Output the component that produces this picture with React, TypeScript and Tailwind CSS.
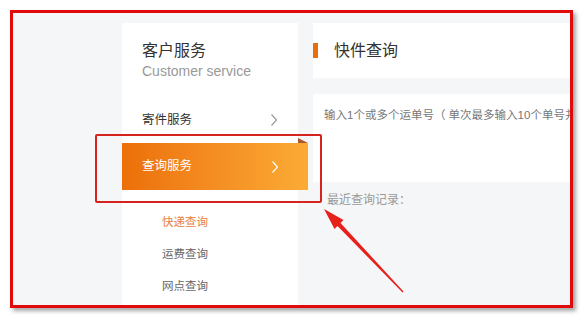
import React from "react";

const cjk = { fontFamily: '"Liberation Sans", "Noto Sans CJK SC", sans-serif' };

function Chevron({ className }: { className?: string }) {
  return (
    <svg width="8" height="14" viewBox="0 0 8 14" className={className} fill="none">
      <path d="M1.5 1.5 L6.5 7 L1.5 12.5" stroke="currentColor" strokeWidth="1.2" />
    </svg>
  );
}

export default function App() {
  const subItems = [
    { label: "快递查询", active: true },
    { label: "运费查询", active: false },
    { label: "网点查询", active: false },
  ];

  return (
    <div className="w-[584px] h-[320px] bg-white relative overflow-hidden" style={cjk}>
      {/* framed screenshot */}
      <div className="absolute left-[10px] top-[10px] w-[563px] h-[298px] border-[3px] border-[#e10a0a] bg-[#f5f6f8] overflow-hidden shadow-[3px_3px_4px_rgba(0,0,0,0.35)]">
        <div className="flex pl-[109px] pt-[10px] h-full">
          {/* sidebar */}
          <div className="w-[176px] shrink-0 bg-white relative">
            <div className="pl-5 pt-[18px]">
              <div className="text-[16px] leading-5 text-[#333]">客户服务</div>
              <div className="text-[14px] leading-5 text-[#999]">Customer service</div>
            </div>
            <div className="mt-4 h-[46px] pl-5 pr-5 flex items-center justify-between text-[12.5px] text-[#333]">
              <span>寄件服务</span>
              <Chevron className="text-[#999]" />
            </div>
            <div className="relative w-[186px] h-[47px] pl-5 pr-[29px] flex items-center justify-between text-[12.5px] text-white bg-gradient-to-r from-[#ec6f07] to-[#fbab35]">
              <span>查询服务</span>
              <Chevron className="text-white" />
              <svg className="absolute right-0 top-[-5px]" width="10" height="5" viewBox="0 0 10 5">
                <polygon points="0,0 0,5 10,5" fill="#a9582f" />
              </svg>
            </div>
            <div className="pt-4 pl-10">
              {subItems.map((s) => (
                <div
                  key={s.label}
                  className={`h-8 leading-8 text-[11.5px] ${s.active ? "text-[#e98042]" : "text-[#666]"}`}
                >
                  {s.label}
                </div>
              ))}
            </div>
          </div>

          {/* content */}
          <div className="ml-[15px] flex-1 min-w-0">
            <div className="h-[55px] bg-white flex items-center">
              <div className="w-[5px] h-[15px] bg-[#ea6d0b]" />
              <div className="ml-4 text-[16px] text-[#333]">快件查询</div>
            </div>
            <div className="mt-4 h-[88px] bg-white pl-[11px] pt-[12px]">
              <div className="text-[11.5px] leading-[18px] text-[#777] whitespace-nowrap">
                输入1个或多个运单号（ 单次最多输入10个单号并以逗号、空格或回车分隔）
              </div>
            </div>
            <div className="pl-[14px] pt-[9px] text-[12px] leading-[18px] text-[#999]">最近查询记录：</div>
          </div>
        </div>
      </div>

      {/* annotation box */}
      <div className="absolute left-[95px] top-[134px] w-[227px] h-[69px] border-2 border-[#d5231d] rounded-[2px]" />

      {/* annotation arrow */}
      <svg className="absolute left-0 top-0" width="584" height="320" viewBox="0 0 584 320">
        <polygon
          points="324,209 343.5,220 340.5,223 403.5,291.5 402.5,292.5 337.5,226 334.5,229"
          fill="#e8201c"
        />
      </svg>
    </div>
  );
}
